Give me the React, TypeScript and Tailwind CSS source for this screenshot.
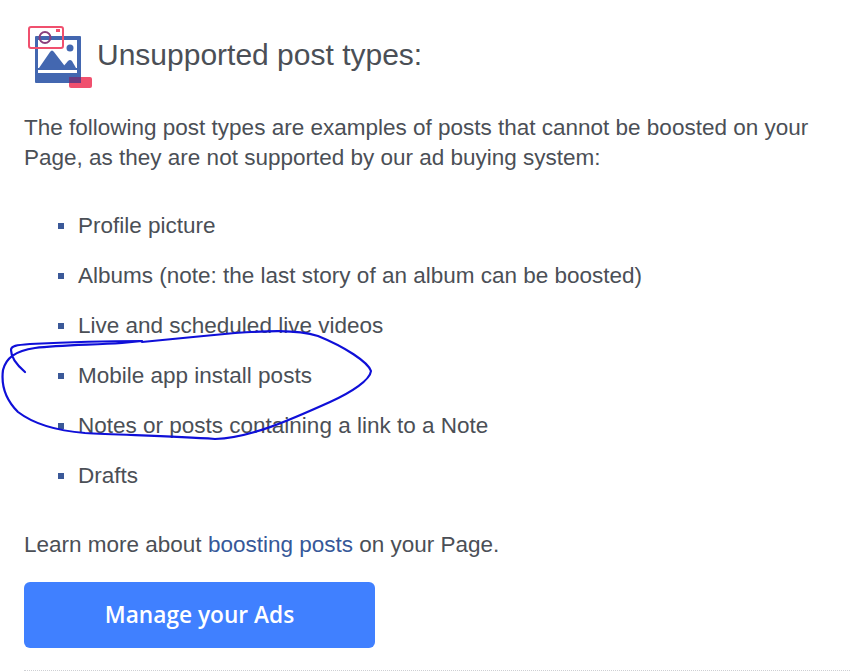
const items = [
  'Profile picture',
  'Albums (note: the last story of an album can be boosted)',
  'Live and scheduled live videos',
  'Mobile app install posts',
  'Notes or posts containing a link to a Note',
  'Drafts',
];

function PostIcon() {
  return (
    <svg width="72" height="68" viewBox="0 0 72 68" className="shrink-0">
      <rect x="12" y="15" width="46" height="47" rx="1" fill="#4367b0" />
      <rect x="15" y="19" width="39" height="33" fill="#fff" />
      <path d="M16 47 L27 31 Q29 28 31 31 L41 44 L43 47 Z" fill="#4367b0" />
      <path d="M39 47 L45 40 Q47 38 49 40 L53 47 Z" fill="#4367b0" />
      <circle cx="47" cy="27" r="3.5" fill="#4367b0" />
      <rect x="15" y="47" width="39" height="2" fill="#4367b0" />
      <rect x="6" y="6" width="34" height="21" rx="2" fill="none" stroke="#f0506e" strokeWidth="2" />
      <circle cx="22" cy="16.5" r="5.5" fill="none" stroke="#8a3f7c" strokeWidth="2" />
      <rect x="33" y="8" width="4" height="3" fill="#f0506e" />
      <rect x="46" y="56" width="23" height="11" rx="2" fill="#f0506e" />
      <rect x="46" y="56" width="12" height="6" fill="#6b3b80" />
    </svg>
  );
}

export default function App() {
  return (
    <div className="relative w-[850px] h-[671px] overflow-hidden bg-white text-[#4b4f56] font-['Liberation_Sans',Arial,sans-serif]">
      <div className="px-6 pt-[21px]">
        <div className="flex items-center h-[68px] -ml-[1px]">
          <PostIcon />
          <h1 className="ml-[2px] text-[30px] leading-8 mt-[-1px]">Unsupported post types:</h1>
        </div>
        <p className="mt-[24px] text-[22.5px] leading-[30px]">
          The following post types are examples of posts that cannot be boosted on your
          <br />
          Page, as they are not supported by our ad buying system:
        </p>
        <ul className="mt-[38px] flex flex-col gap-[20px] pl-[34px]">
          {items.map((item) => (
            <li key={item} className="flex items-center h-[30px] text-[22.5px]">
              <span className="w-[6px] h-[6px] bg-[#3b5998] mr-[14px]" />
              {item}
            </li>
          ))}
        </ul>
        <p className="mt-[39px] text-[22.5px] leading-[30px]">
          Learn more about <a className="text-[#365899]">boosting posts</a> on your Page.
        </p>
        <button className="mt-[22px] w-[351px] h-[66px] rounded-[6px] bg-[#4080ff] text-white text-[22.7px] font-semibold font-['Open_Sans',sans-serif]">
          Manage your Ads
        </button>
      </div>
      <div className="absolute left-6 right-0 top-[670px] border-t border-dotted border-[#ced0d4]" />
      <svg width="850" height="671" className="absolute left-0 top-0 pointer-events-none" fill="none" stroke="#0f0fd8" strokeWidth="2.2" strokeLinecap="round" strokeLinejoin="round">
        <path d="M25 372 C18 366 11 358 11 350 C11 346 16 345 30 344 C70 342 110 341 142 341 L122 343 C90 345 60 345 35 348 C15 351 6 358 3 370 C1 385 6 400 18 412 C35 425 60 431 85 433 C120 435 170 436 215 439 C250 438 290 420 330 402 C352 392 370 380 371 371 C368 362 345 347 318 336 C295 329 265 331 235 333 C205 336 170 339 142 342" />
      </svg>
    </div>
  );
}
